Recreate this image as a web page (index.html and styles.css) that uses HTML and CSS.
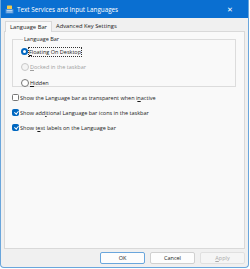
FILE: index.html
```html
<!DOCTYPE html>
<html lang="en">
<head>
  <meta charset="UTF-8">
  <title>Text Services and Input Languages</title>
  <link rel="stylesheet" href="styles.css">
</head>
<body>

<div class="window">
  <div class="titlebar">
    <svg class="app-icon" width="9" height="9" viewBox="0 0 9 9">
      <rect x="2" y="0.5" width="5" height="3.5" rx="0.6" fill="#f2c94c"/>
      <rect x="0.5" y="4" width="8" height="4.5" rx="0.6" fill="#4a8fd8"/>
      <rect x="1.5" y="5" width="6" height="0.8" fill="#d8e8f8"/>
      <rect x="1.5" y="6.6" width="6" height="0.8" fill="#d8e8f8"/>
    </svg>
    <span class="title">Text Services and Input Languages</span>
    <span class="close">✕</span>
  </div>

  <div class="content">
    <div class="tabs">
      <div class="tab active">Language Bar</div>
      <div class="tab">Advanced Key Settings</div>
    </div>

    <div class="panel">
      <fieldset class="group">
        <legend>Language Bar</legend>
        <div class="option">
          <span class="radio checked"></span>
          <span class="label focus"><u>F</u>loating On Desktop</span>
        </div>
        <div class="option disabled">
          <span class="radio"></span>
          <span class="label"><u>D</u>ocked in the taskbar</span>
        </div>
        <div class="option">
          <span class="radio"></span>
          <span class="label"><u>H</u>idden</span>
        </div>
      </fieldset>

      <div class="checks">
        <div class="option">
          <span class="check"></span>
          <span class="label">Show the Language bar as transparent when i<u>n</u>active</span>
        </div>
        <div class="option">
          <span class="check checked"></span>
          <span class="label">Show add<u>i</u>tional Language bar icons in the taskbar</span>
        </div>
        <div class="option">
          <span class="check checked"></span>
          <span class="label">Show t<u>e</u>xt labels on the Language bar</span>
        </div>
      </div>
    </div>

    <div class="buttons">
      <button class="btn default">OK</button>
      <button class="btn">Cancel</button>
      <button class="btn" disabled><u>A</u>pply</button>
    </div>
  </div>
</div>

</body>
</html>
```

FILE: styles.css
```css
body, html {
  margin: 0;
  padding: 0;
  background: #ffffff;
  font-family: "Open Sans", "Noto Sans", sans-serif;
  font-size: 5.5px;
  color: #1a1a1a;
}

.window {
  width: 249px;
  height: 268px;
  box-sizing: border-box;
  border: 1px solid #6aa6dc;
  border-top: none;
  border-radius: 0 0 4px 4px;
  background: #f0f0f0;
  display: flex;
  flex-direction: column;
  overflow: hidden;
}

.titlebar {
  height: 18px;
  background: #0a6fd1;
  color: #ffffff;
  display: flex;
  align-items: center;
  padding: 0 3px 0 4px;
  flex-shrink: 0;
}

.app-icon {
  margin-right: 3px;
}

.title {
  font-size: 6.3px;
  flex: 1;
}

.close {
  font-size: 7px;
  margin-right: 12px;
}

.content {
  flex: 1;
  display: flex;
  flex-direction: column;
  padding: 2px 3px 3px 3px;
}

.tabs {
  display: flex;
  height: 11px;
  padding-left: 1px;
}

.tab {
  padding: 0 3px;
  line-height: 11px;
  font-size: 5.8px;
  border: 1px solid transparent;
  border-bottom: none;
}

.tab.active {
  padding: 0 4px;
  background: #f9f9f9;
  border-color: #d9d9d9;
  position: relative;
  top: 1px;
  z-index: 1;
}

.panel {
  height: 218px;
  box-sizing: border-box;
  background: #f9f9f9;
  border: 1px solid #d9d9d9;
  padding: 4px 8px 0 7px;
}

.group {
  margin: 0;
  padding: 2px 0 3px 8px;
  border: 1px solid #dcdcdc;
  height: 51px;
  box-sizing: border-box;
}

.group legend {
  padding: 0 1px;
  margin-left: 2px;
  line-height: 6px;
}

.option {
  display: flex;
  align-items: center;
  height: 15.5px;
}

.option.disabled {
  color: #a0a0a0;
}

.radio {
  width: 6px;
  height: 6px;
  border: 1px solid #777777;
  border-radius: 50%;
  margin-right: 1px;
  background: #ffffff;
}

.option.disabled .radio {
  border-color: #c8c8c8;
  background: #f4f4f4;
}

.radio.checked {
  border: 2.5px solid #0067c0;
  width: 3px;
  height: 3px;
}

.label.focus {
  outline: 1px dotted #333333;
  outline-offset: 0;
}

.checks {
  padding-top: 3px;
}

.checks .option {
  height: 15px;
}

.check {
  width: 7px;
  height: 7px;
  box-sizing: border-box;
  border: 1px solid #777777;
  border-radius: 1.5px;
  margin-right: 1px;
  background: #ffffff;
  position: relative;
}

.check.checked {
  background: #0067c0;
  border-color: #0067c0;
}

.check.checked::after {
  content: "";
  position: absolute;
  left: 1.6px;
  top: 0.4px;
  width: 1.5px;
  height: 3px;
  border: solid #ffffff;
  border-width: 0 0.8px 0.8px 0;
  transform: rotate(40deg);
}

.buttons {
  display: flex;
  justify-content: flex-end;
  gap: 5px;
  padding-top: 3px;
}

.btn {
  width: 45px;
  height: 12px;
  padding: 0;
  font-family: inherit;
  font-size: 5.5px;
  color: #1a1a1a;
  background: #fdfdfd;
  border: 1px solid #d0d0d0;
  border-radius: 2px;
}

.btn.default {
  border-color: #6aa6dc;
}

.btn:disabled {
  color: #a8a8a8;
  background: #f5f5f5;
  border-color: #e0e0e0;
}
```
